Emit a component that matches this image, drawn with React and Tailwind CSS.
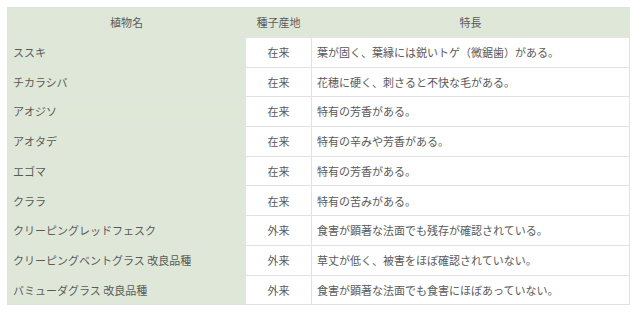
import React from "react";

const rows = [
  ["ススキ", "在来", "葉が固く、葉縁には鋭いトゲ（微鋸歯）がある。"],
  ["チカラシバ", "在来", "花穂に硬く、刺さると不快な毛がある。"],
  ["アオジソ", "在来", "特有の芳香がある。"],
  ["アオタデ", "在来", "特有の辛みや芳香がある。"],
  ["エゴマ", "在来", "特有の芳香がある。"],
  ["クララ", "在来", "特有の苦みがある。"],
  ["クリーピングレッドフェスク", "外来", "食害が顕著な法面でも残存が確認されている。"],
  ["クリーピングベントグラス 改良品種", "外来", "草丈が低く、被害をほぼ確認されていない。"],
  ["バミューダグラス 改良品種", "外来", "食害が顕著な法面でも食害にほぼあっていない。"],
];

export default function App() {
  return (
    <div
      className="w-[640px] h-[312px] bg-white pt-[7px] pl-[7px]"
      style={{ fontFamily: '"Noto Sans CJK JP", "Noto Sans", sans-serif' }}
    >
      <table className="border-collapse w-[622px] text-[11px] text-[#5a5a5a] table-fixed">
        <colgroup>
          <col className="w-[238px]" />
          <col className="w-[66px]" />
          <col className="w-[318px]" />
        </colgroup>
        <thead>
          <tr className="h-[30px] bg-[#dfe8d8]">
            <th className="border border-[#e2e2e2] font-normal text-center">植物名</th>
            <th className="border border-[#e2e2e2] font-normal text-center">種子産地</th>
            <th className="border border-[#e2e2e2] font-normal text-center">特長</th>
          </tr>
        </thead>
        <tbody>
          {rows.map((r, i) => (
            <tr key={i} className="h-[29.7px]">
              <td className="border border-[#e2e2e2] bg-[#dfe8d8] pl-[5px]">{r[0]}</td>
              <td className="border border-[#e2e2e2] bg-white text-center">{r[1]}</td>
              <td className="border border-[#e2e2e2] bg-white pl-[5px]">{r[2]}</td>
            </tr>
          ))}
        </tbody>
      </table>
    </div>
  );
}
